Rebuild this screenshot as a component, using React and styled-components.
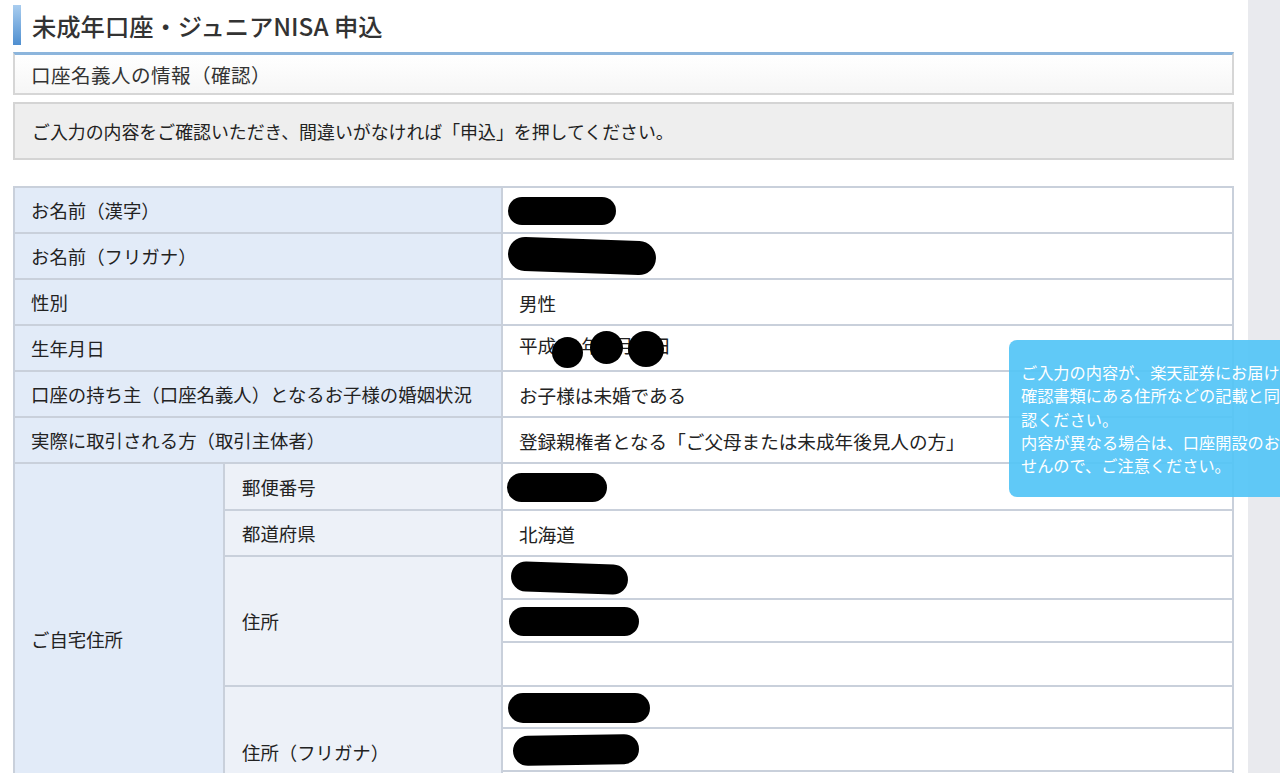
import React from "react";
import styled, { createGlobalStyle } from "styled-components";

const Global = createGlobalStyle`
  html, body { margin: 0; padding: 0; background: #fff; }
  body {
    font-family: "Noto Sans CJK JP", "Noto Sans", sans-serif;
    color: #222;
    overflow: hidden;
  }
`;

const Page = styled.div`
  position: relative;
  display: grid;
  grid-template-columns: 1248px 32px;
  width: 1280px;
  height: 773px;
  overflow: hidden;
`;

const Main = styled.main`
  padding: 5px 14px 0 13px;
  display: flex;
  flex-direction: column;
`;

const Side = styled.div`
  background: #e9eaee;
`;

const TitleRow = styled.div`
  display: flex;
  align-items: center;
  gap: 11px;
  height: 40px;
`;

const TitleBar = styled.span`
  width: 8px;
  height: 40px;
  background: linear-gradient(#a9cdef, #4f8fd0);
`;

const Title = styled.h1`
  margin: 0;
  font-size: 24.3px;
  font-weight: 500;
  color: #333;
`;

const SectionHead = styled.div`
  margin-top: 7px;
  height: 38px;
  display: flex;
  align-items: center;
  padding-left: 16px;
  border: 2px solid #d6d6d6;
  border-top: 3px solid #8cb5dc;
  background: linear-gradient(#ffffff, #f6f6f6);
  font-size: 19.6px;
  letter-spacing: 0.4px;
  color: #333;
`;

const Notice = styled.div`
  margin-top: 7px;
  height: 54px;
  display: flex;
  align-items: center;
  padding-left: 17px;
  border: 2px solid #d4d4d4;
  background: #eeeeee;
  font-size: 17.9px;
  color: #222;
`;

const Table = styled.table`
  margin-top: 26px;
  width: 100%;
  border-collapse: collapse;
  table-layout: fixed;
  border: 1px solid #c6cdd8;
`;

const Label = styled.th`
  text-align: left;
  font-weight: 400;
  font-size: 18.4px;
  background: ${p => (p.$sub ? "#edf1f8" : "#e2ebf8")};
  border: 2px solid #c9d0db;
  padding: 0 0 0 ${p => (p.$sub ? "17px" : "16px")};
  height: ${p => p.$h || 44}px;
  color: #222;
`;

const Value = styled.td`
  background: #fff;
  border: 2px solid #c9d0db;
  font-size: 18.6px;
  padding: 0 0 0 ${p => p.$pad ?? 16}px;
  height: ${p => p.$h || 44}px;
  color: #222;
`;

const Blob = styled.span`
  display: inline-block;
  vertical-align: middle;
  background: #000;
  width: ${p => p.$w}px;
  height: ${p => p.$h}px;
  border-radius: ${p => p.$h / 2}px;
  margin-left: ${p => p.$ml || 0}px;
  transform: rotate(${p => p.$r || 0}deg);
`;

const Dot = styled.span`
  display: inline-block;
  vertical-align: middle;
  background: #000;
  width: ${p => p.$s}px;
  height: ${p => p.$s}px;
  border-radius: 50%;
  margin: 0 ${p => p.$mr}px 0 ${p => p.$ml}px;
  position: relative;
  top: ${p => p.$t || 0}px;
`;

const Tooltip = styled.div`
  position: absolute;
  left: 1009px;
  top: 340px;
  width: 300px;
  height: 157px;
  box-sizing: border-box;
  padding: 21px 0 0 12px;
  border-radius: 8px;
  background: rgba(82, 196, 246, 0.92);
  color: #fff;
  font-size: 16.2px;
  line-height: 23.3px;
  white-space: nowrap;
`;

const rows = [
  ["お名前（漢字）", <Blob $w={108} $h={28} $ml={-11} />],
  ["お名前（フリガナ）", <Blob $w={148} $h={34} $ml={-11} $r={2} />],
  ["性別", "男性"],
  [
    "生年月日",
    <span>
      平成
      <Dot $s={31} $ml={-4} $mr={-2} $t={4} />年
      <Dot $s={33} $ml={-10} $mr={-8} $t={-1} />月
      <Dot $s={36} $ml={-5} $mr={-12} $t={1} />日
    </span>,
  ],
  ["口座の持ち主（口座名義人）となるお子様の婚姻状況", "お子様は未婚である"],
  ["実際に取引される方（取引主体者）", "登録親権者となる「ご父母または未成年後見人の方」"],
];

export default function App() {
  return (
    <>
      <Global />
      <Page>
        <Main>
          <TitleRow>
            <TitleBar />
            <Title>未成年口座・ジュニアNISA 申込</Title>
          </TitleRow>
          <SectionHead>口座名義人の情報（確認）</SectionHead>
          <Notice>ご入力の内容をご確認いただき、間違いがなければ「申込」を押してください。</Notice>
          <Table>
            <colgroup>
              <col style={{ width: "210px" }} />
              <col style={{ width: "278px" }} />
              <col />
            </colgroup>
            <tbody>
              {rows.map(([l, v]) => (
                <tr key={l}>
                  <Label colSpan={2}>{l}</Label>
                  <Value>{v}</Value>
                </tr>
              ))}
              <tr>
                <Label rowSpan={8}>ご自宅住所</Label>
                <Label $sub $h={45}>郵便番号</Label>
                <Value $h={45} $pad={4}><Blob $w={100} $h={29} /></Value>
              </tr>
              <tr>
                <Label $sub>都道府県</Label>
                <Value>北海道</Value>
              </tr>
              <tr>
                <Label $sub rowSpan={3} $h={41}>住所</Label>
                <Value $h={41} $pad={8}><Blob $w={117} $h={30} $r={2} /></Value>
              </tr>
              <tr>
                <Value $h={41} $pad={6}><Blob $w={130} $h={29} /></Value>
              </tr>
              <tr>
                <Value $h={42} />
              </tr>
              <tr>
                <Label $sub rowSpan={3} $h={41} style={{ verticalAlign: "top", paddingTop: "52px" }}>住所（フリガナ）</Label>
                <Value $h={40} $pad={5}><Blob $w={142} $h={30} /></Value>
              </tr>
              <tr>
                <Value $h={41} $pad={10}><Blob $w={126} $h={30} $r={-1} /></Value>
              </tr>
              <tr>
                <Value $h={41} />
              </tr>
            </tbody>
          </Table>
        </Main>
        <Side />
        <Tooltip>
          ご入力の内容が、楽天証券にお届け
          <br />
          確認書類にある住所などの記載と同
          <br />
          認ください。
          <br />
          内容が異なる場合は、口座開設のお
          <br />
          せんので、ご注意ください。
        </Tooltip>
      </Page>
    </>
  );
}
